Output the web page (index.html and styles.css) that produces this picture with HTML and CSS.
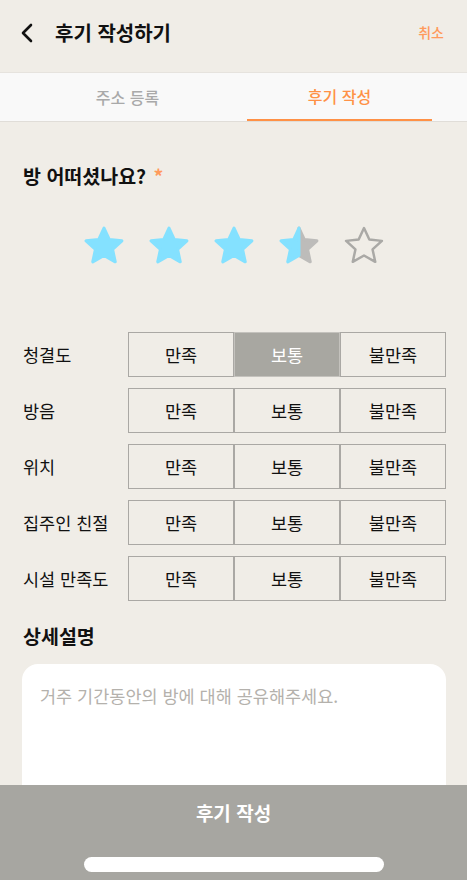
FILE: index.html
```html
<!DOCTYPE html>
<html lang="ko">
<head>
  <meta charset="UTF-8" />
  <meta name="viewport" content="width=device-width, initial-scale=1.0" />
  <title>후기 작성하기</title>
  <link rel="stylesheet" href="styles.css">
</head>
<body>
  <header class="topbar">
    <button class="back" aria-label="뒤로">
      <svg width="14" height="20" viewBox="0 0 14 20"><path d="M11 2 L3 10 L11 18" fill="none" stroke="#111" stroke-width="2.6" stroke-linecap="round" stroke-linejoin="round"/></svg>
    </button>
    <h1>후기 작성하기</h1>
    <span class="cancel">취소</span>
  </header>

  <nav class="tabs">
    <div class="tab">주소 등록</div>
    <div class="tab active">후기 작성</div>
  </nav>

  <main class="content">
    <h2 class="question">방 어떠셨나요? <span class="req">*</span></h2>

    <div class="stars">
      <svg class="star" viewBox="1.5 1.5 21 21"><path class="full" d="M12 2.6 L14.8 8.6 L21.4 9.3 L16.5 13.8 L17.9 20.3 L12 17 L6.1 20.3 L7.5 13.8 L2.6 9.3 L9.2 8.6 Z"/></svg>
      <svg class="star" viewBox="1.5 1.5 21 21"><path class="full" d="M12 2.6 L14.8 8.6 L21.4 9.3 L16.5 13.8 L17.9 20.3 L12 17 L6.1 20.3 L7.5 13.8 L2.6 9.3 L9.2 8.6 Z"/></svg>
      <svg class="star" viewBox="1.5 1.5 21 21"><path class="full" d="M12 2.6 L14.8 8.6 L21.4 9.3 L16.5 13.8 L17.9 20.3 L12 17 L6.1 20.3 L7.5 13.8 L2.6 9.3 L9.2 8.6 Z"/></svg>
      <svg class="star" viewBox="1.5 1.5 21 21">
        <path class="grey" d="M12 2.6 L14.8 8.6 L21.4 9.3 L16.5 13.8 L17.9 20.3 L12 17 Z"/>
        <path class="full" d="M12 2.6 L12 17 L6.1 20.3 L7.5 13.8 L2.6 9.3 L9.2 8.6 Z"/>
      </svg>
      <svg class="star" viewBox="1.5 1.5 21 21"><path class="empty" d="M12 2.6 L14.8 8.6 L21.4 9.3 L16.5 13.8 L17.9 20.3 L12 17 L6.1 20.3 L7.5 13.8 L2.6 9.3 L9.2 8.6 Z"/></svg>
    </div>

    <div class="ratings">
      <div class="row">
        <span class="label">청결도</span>
        <button class="opt">만족</button><button class="opt selected">보통</button><button class="opt">불만족</button>
      </div>
      <div class="row">
        <span class="label">방음</span>
        <button class="opt">만족</button><button class="opt">보통</button><button class="opt">불만족</button>
      </div>
      <div class="row">
        <span class="label">위치</span>
        <button class="opt">만족</button><button class="opt">보통</button><button class="opt">불만족</button>
      </div>
      <div class="row">
        <span class="label">집주인 친절</span>
        <button class="opt">만족</button><button class="opt">보통</button><button class="opt">불만족</button>
      </div>
      <div class="row">
        <span class="label">시설 만족도</span>
        <button class="opt">만족</button><button class="opt">보통</button><button class="opt">불만족</button>
      </div>
    </div>

    <h3 class="section">상세설명</h3>
    <textarea class="detail" placeholder="거주 기간동안의 방에 대해 공유해주세요."></textarea>
  </main>

  <footer class="submit">
    <div class="submit-label">후기 작성</div>
    <div class="home-bar"></div>
  </footer>
</body>
</html>
```

FILE: styles.css
```css
body {
  margin: 0;
  background: #f0ede7;
  color: #111;
  font-family: "Noto Sans CJK KR", "Noto Sans", sans-serif;
  width: 467px;
  height: 880px;
  overflow: hidden;
}
.topbar {
  height: 72px;
  box-sizing: border-box;
  padding: 20px 23px 0 20px;
  display: flex;
  align-items: flex-start;
}
.back {
  background: none;
  border: none;
  padding: 0;
  width: 35px;
  height: 26px;
  display: flex;
  align-items: center;
}
.topbar h1 {
  margin: 0;
  font-size: 20px;
  line-height: 26px;
  font-weight: 700;
  flex: 1;
}
.cancel {
  color: #ff9a5c;
  font-size: 14px;
  line-height: 24px;
  font-weight: 500;
}
.tabs {
  display: flex;
  gap: 27px;
  padding: 0 35px;
  background: #f9f9f9;
  border-top: 1px solid #e6e3de;
  border-bottom: 1px solid #e0ddd8;
  height: 48px;
}
.tab {
  flex: 1;
  text-align: center;
  line-height: 48px;
  font-size: 16px;
  font-weight: 500;
  color: #a9a9a9;
  box-sizing: border-box;
}
.tab.active {
  color: #ff9146;
  border-bottom: 2px solid #ff9146;
  line-height: 46px;
}
.content {
  padding: 0 21px 0 23px;
}
.question {
  margin: 41px 0 0;
  font-size: 19.5px;
  line-height: 26px;
  font-weight: 700;
}
.req {
  color: #ff9a5c;
  margin-left: 2px;
}
.stars {
  display: flex;
  justify-content: center;
  gap: 25px;
  margin: 37px 0 0 -2px;
}
.star {
  width: 40px;
  height: 40px;
}
.star path {
  stroke-linejoin: round;
  stroke-width: 1.6;
}
.star .full {
  fill: #84e1ff;
  stroke: #84e1ff;
}
.star .grey {
  fill: #bdbcba;
  stroke: #bdbcba;
}
.star .empty {
  fill: none;
  stroke: #aaa9a6;
  stroke-width: 1.3;
}
.ratings {
  margin-top: 66px;
  display: flex;
  flex-direction: column;
  gap: 11px;
}
.row {
  display: flex;
  align-items: center;
}
.label {
  width: 105px;
  font-size: 17.5px;
}
.opt {
  width: 106px;
  height: 45px;
  background: #f0ede7;
  border: 1px solid #aaa8a4;
  font-family: inherit;
  font-size: 17.5px;
  color: #111;
  padding: 0;
}
.opt.selected {
  background: #a8a7a1;
  border-color: #c4c2bd;
  color: #fff;
}
.section {
  margin: 23px 0 0;
  font-size: 19.5px;
  line-height: 24px;
  font-weight: 700;
}
.detail {
  display: block;
  margin: 16px 0 0 -1px;
  width: 424px;
  height: 180px;
  box-sizing: border-box;
  border: none;
  border-radius: 16px;
  background: #fff;
  padding: 19px 18px;
  font-family: inherit;
  font-size: 17.5px;
  resize: none;
}
.detail::placeholder {
  color: #b4b1ac;
}
.submit {
  position: fixed;
  left: 0;
  right: 0;
  bottom: 0;
  height: 95px;
  background: #a7a6a1;
  display: flex;
  flex-direction: column;
  align-items: center;
}
.submit-label {
  color: #fff;
  font-size: 19px;
  font-weight: 700;
  line-height: 24px;
  margin-top: 16px;
}
.home-bar {
  width: 300px;
  height: 15px;
  border-radius: 8px;
  background: #fff;
  margin-top: 32px;
}
```
